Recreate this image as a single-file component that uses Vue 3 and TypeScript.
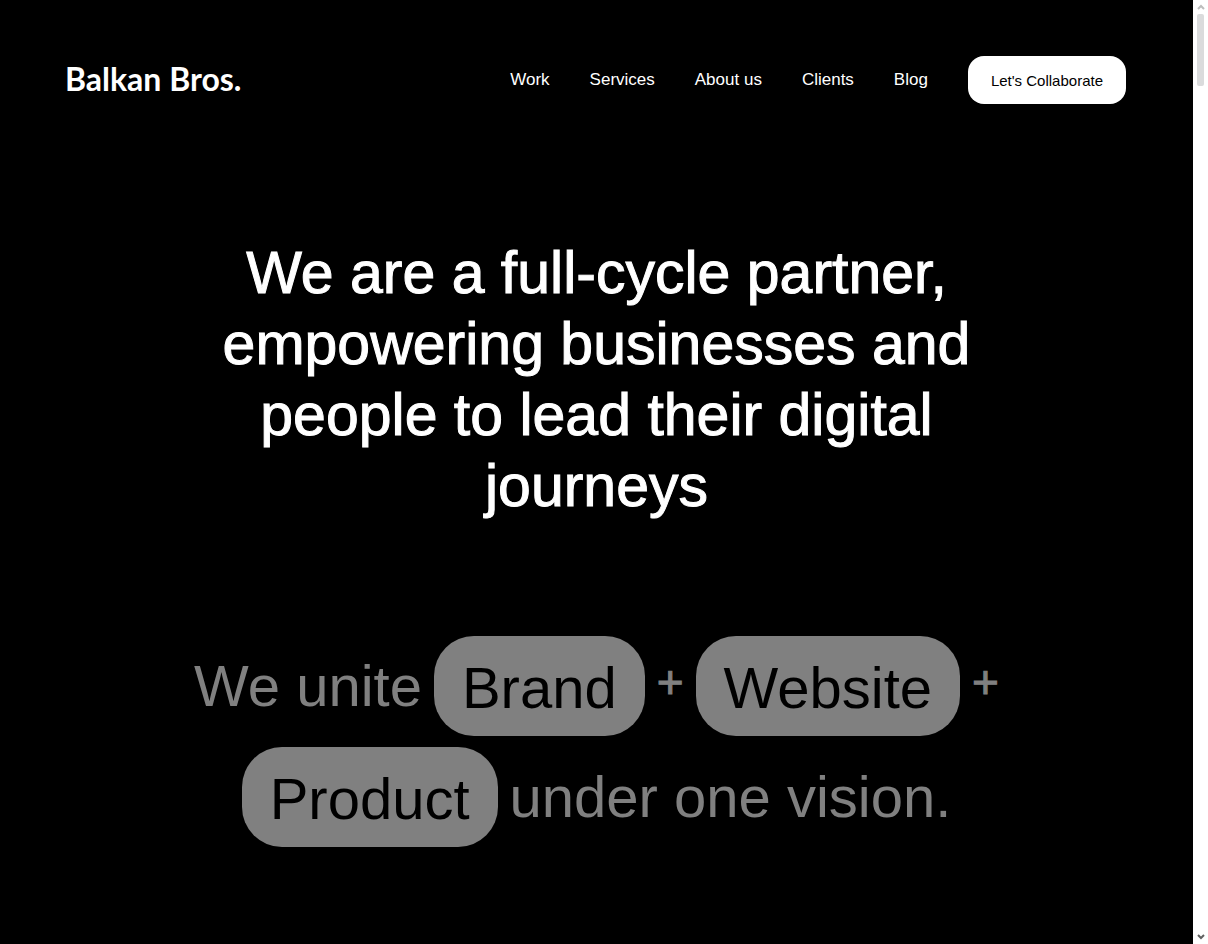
<script setup lang="ts">
const links: string[] = ['Work', 'Services', 'About us', 'Clients', 'Blog']

interface Piece {
  text: string
  kind: 'plain' | 'pill' | 'plus'
}

const pieces: Piece[] = [
  { text: 'We unite', kind: 'plain' },
  { text: 'Brand', kind: 'pill' },
  { text: '+', kind: 'plus' },
  { text: 'Website', kind: 'pill' },
  { text: '+', kind: 'plus' },
  { text: 'Product', kind: 'pill' },
  { text: 'under one vision.', kind: 'plain' },
]
</script>

<template>
  <div class="window">
    <div class="page">
      <header class="header">
        <a class="logo" href="#">Balkan Bros.</a>
        <nav class="nav" aria-label="Main">
          <a v-for="link in links" :key="link" class="link" href="#">{{ link }}</a>
          <a class="cta" href="#">Let's Collaborate</a>
        </nav>
      </header>
      <main class="main">
        <h1 class="title">
          We are a full-cycle partner, empowering businesses and people to lead their digital journeys
        </h1>
        <p class="unite">
          <span v-for="(piece, i) in pieces" :key="i" :class="piece.kind">{{ piece.text }}</span>
        </p>
      </main>
    </div>
    <div class="scrollbar" aria-hidden="true">
      <svg class="arrow up" viewBox="0 0 8 6" width="8" height="6">
        <path d="M1 5 L4 2 L7 5" />
      </svg>
      <div class="thumb"></div>
      <svg class="arrow down" viewBox="0 0 8 6" width="8" height="6">
        <path d="M1 1 L4 4 L7 1" />
      </svg>
    </div>
  </div>
</template>

<style>
body {
  margin: 0;
  background: #000;
}
</style>

<style scoped>
.window {
  display: grid;
  grid-template-columns: minmax(0, 1fr) 15px;
  min-height: 100vh;
  background: #000;
  color: #fff;
  font-family: "Liberation Sans", Arial, sans-serif;
}

.header {
  display: flex;
  align-items: center;
  justify-content: space-between;
  padding: 56px 67px 0 65px;
}

.logo {
  color: #fff;
  font-family: Lato, sans-serif;
  font-size: 32px;
  font-weight: 700;
  line-height: 46px;
  padding-bottom: 2px;
  text-decoration: none;
  white-space: nowrap;
}

.nav {
  display: flex;
  align-items: center;
  gap: 40px;
}

.link {
  color: #fff;
  font-size: 17px;
  line-height: 20px;
  text-decoration: none;
  white-space: nowrap;
}

.cta {
  padding: 1px 23px 0;
  border-radius: 16px;
  background: #fff;
  color: #000;
  font-size: 15px;
  line-height: 47px;
  text-decoration: none;
  white-space: nowrap;
}

.main {
  display: flex;
  flex-direction: column;
  align-items: center;
  gap: 114px;
  padding: 134px 24px 96px;
}

.title {
  max-width: 800px;
  margin: 0;
  font-size: 59px;
  font-weight: 400;
  line-height: 71px;
  text-align: center;
  -webkit-text-stroke: 1px #fff;
}

.unite {
  display: flex;
  flex-wrap: wrap;
  align-items: center;
  justify-content: center;
  gap: 11px 12px;
  max-width: 900px;
  margin: 0;
  color: #808080;
  font-size: 58px;
  line-height: 70px;
}

.pill {
  padding: 17px 28px 13px;
  border-radius: 40px;
  background: #808080;
  color: #000;
}

.plus {
  font-size: 46px;
  padding-bottom: 8px;
  -webkit-text-stroke: 1px #808080;
}

.scrollbar {
  display: flex;
  flex-direction: column;
  align-items: center;
  background: #fff;
}

.arrow {
  fill: none;
  stroke-width: 2;
}

.up {
  margin: 4px 0;
  stroke: #bdbdbd;
}

.down {
  margin: auto 0 4px;
  stroke: #606060;
}

.thumb {
  width: 7px;
  height: 72px;
  border-radius: 2px;
  background: #dadbdc;
}
</style>
